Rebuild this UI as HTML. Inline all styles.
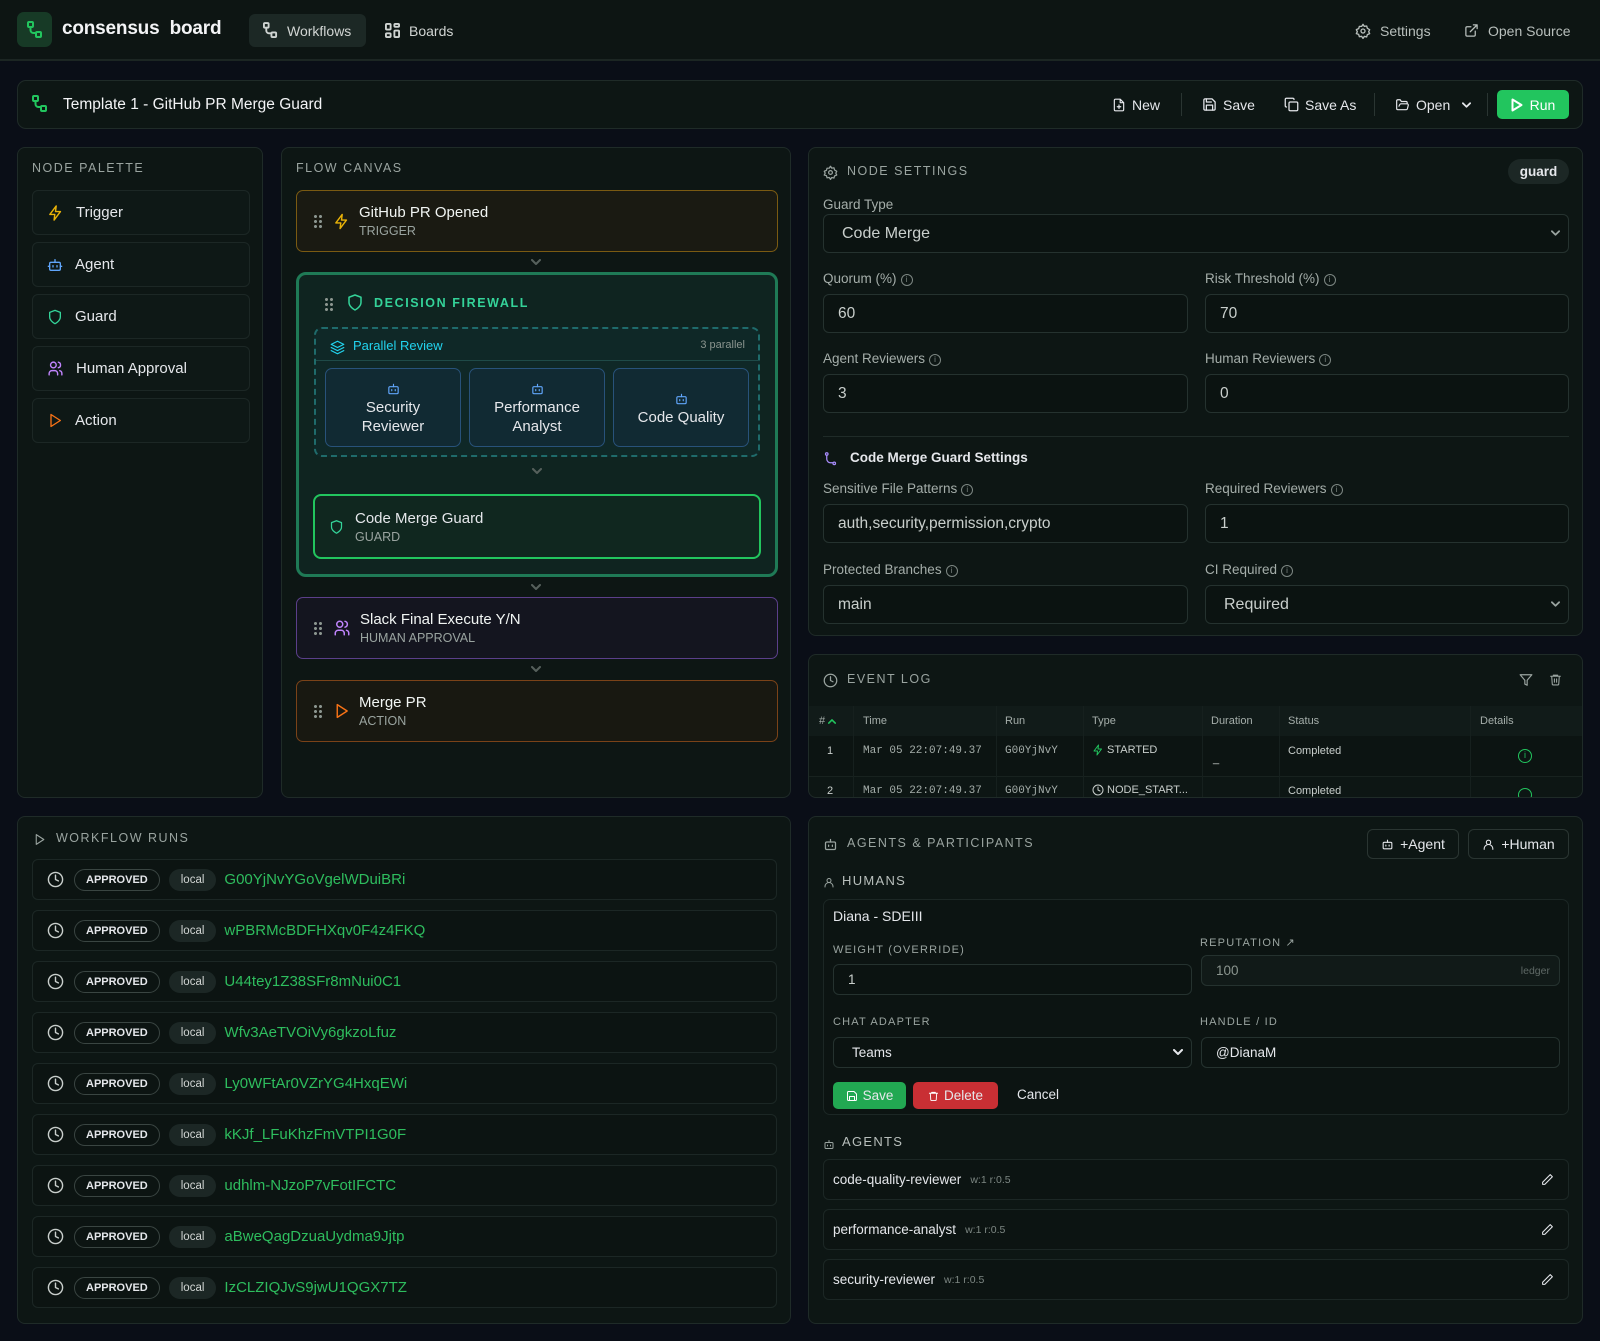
<!DOCTYPE html>
<html><head><meta charset="utf-8"><style>
*{box-sizing:border-box;margin:0;padding:0}
body{width:1600px;height:1341px;background:#0a0e17;font-family:"Liberation Sans",sans-serif;color:#e5e7eb;position:relative;overflow:hidden;font-size:15px}
.a{position:absolute}
.panel{position:absolute;background:#0d1614;border:1px solid #1f2b28;border-radius:8px}
.lbl{position:absolute;font-size:12.5px;letter-spacing:1.5px;color:#9aa4a0;text-transform:uppercase}
svg{display:inline-block;vertical-align:middle;fill:none;stroke-width:2;stroke-linecap:round;stroke-linejoin:round}
.item{position:absolute;left:14px;width:218px;height:45px;border:1px solid #1c2725;border-radius:6px;background:#0e1816;display:flex;align-items:center;padding-left:14px;gap:12px;font-size:15px}
.node{position:absolute;left:14px;width:482px;height:62px;border-radius:7px;display:flex;align-items:center;padding-left:16px}
.node .t{font-size:15px;color:#f1f5f3}
.node .s{font-size:12.5px;color:#9aa4a0;margin-top:3px}
.grip{width:10px;height:14px;margin-right:10px;background:radial-gradient(circle,#8b958f 1.4px,transparent 1.6px) 0 0/5px 5px}
.chev{position:absolute;left:0;width:100%;display:flex;justify-content:center}
.f{position:absolute;font-size:13.5px;color:#a5aeaa}
.in{position:absolute;height:39px;border:1px solid #25322f;border-radius:6px;background:#0b1311;padding-left:14px;display:flex;align-items:center;font-size:15.5px;color:#c9cfcc}
.info{display:inline-block;width:12px;height:12px;border:1px solid #7d8783;border-radius:50%;font-size:8px;text-align:center;line-height:10px;color:#7d8783;margin-left:4px;vertical-align:1px}
.row{position:absolute;left:14px;width:745px;height:41px;border:1px solid #1c2725;border-radius:6px;background:#0c1412;display:flex;align-items:center;padding-left:14px}
.pill{border:1px solid #3a4542;border-radius:12px;font-size:11px;font-weight:bold;padding:4px 11px;color:#e5e7eb;margin-left:10px}
.loc{background:#1c2725;border-radius:12px;font-size:11.5px;padding:5px 12px;color:#d1d5d3;margin-left:9px}
.rid{color:#2ebd5e;font-size:15px;margin-left:8px}
.agent{position:absolute;left:14px;width:746px;height:41px;border:1px solid #1c2725;border-radius:6px;background:#0c1412;display:flex;align-items:center;padding-left:9px;font-size:13.5px}
.agent small{color:#7d8783;font-size:10.5px;margin-left:9px}
.th{position:absolute;top:12px;font-size:11px;color:#a5aeaa}
.td{position:absolute;font-size:11px;color:#c9cfcc}
.mono{font-family:"Liberation Mono",monospace;color:#a5aeaa}
.tb{position:absolute;top:0;height:47px;display:flex;align-items:center;gap:6px;font-size:14px;color:#e5e7eb}
.dd{position:absolute;right:8px;top:50%;margin-top:-4px}
</style></head><body>

<!-- header -->
<div class="a" style="left:0;top:0;width:1600px;height:61px;background:#0d1513;border-bottom:2px solid #1c2623"></div>
<div class="a" style="left:17px;top:12px;width:35px;height:35px;border-radius:7px;background:#173a26;display:flex;align-items:center;justify-content:center"><svg width="16" height="18" viewBox="0 0 16 18" stroke="#22c55e" stroke-width="1.6"><rect x="1" y="1" width="5" height="5" rx="1"/><rect x="9" y="11" width="5" height="5" rx="1"/><path d="M3.5 6v3a3 3 0 0 0 3 3H9"/></svg></div>
<div class="a" style="left:62px;top:18px;font-size:19px;font-weight:bold;color:#f3f4f6;letter-spacing:-0.2px">consensus&nbsp; board</div>
<div class="a" style="left:249px;top:14px;width:117px;height:33px;background:#1c2825;border-radius:6px;display:flex;align-items:center;padding-left:14px;gap:9px;font-size:14px;color:#d1d5d3"><svg width="15" height="17" viewBox="0 0 16 18" stroke="#cfd4d2" stroke-width="1.5"><rect x="1" y="1" width="5" height="5" rx="1"/><rect x="9" y="11" width="5" height="5" rx="1"/><path d="M3.5 6v3a3 3 0 0 0 3 3H9"/></svg>Workflows</div>
<div class="a" style="left:385px;top:14px;height:33px;display:flex;align-items:center;gap:9px;font-size:14px;color:#d1d5d3"><svg width="15" height="15" viewBox="0 0 16 16" stroke="#cfd4d2" stroke-width="1.5"><rect x="1" y="1" width="5" height="6" rx="1"/><rect x="10" y="1" width="5" height="3" rx="1"/><rect x="10" y="8" width="5" height="7" rx="1"/><rect x="1" y="11" width="5" height="4" rx="1"/></svg>Boards</div>
<div class="a" style="left:1355px;top:14px;height:33px;display:flex;align-items:center;gap:9px;font-size:14px;color:#b8bfbc"><svg width="16" height="16" viewBox="0 0 24 24" stroke="#b8bfbc" stroke-width="1.8"><circle cx="12" cy="12" r="3"/><path d="M12 2l2 3 3.5-.5 1 3.4L22 10l-1.5 3 1.5 3-3.5 1.5-1 3.4L14 20l-2 3-2-3-3.5.5-1-3.4L2 16l1.5-3L2 10l3.5-1.5 1-3.4L10 5z"/></svg>Settings</div>
<div class="a" style="left:1464px;top:14px;height:33px;display:flex;align-items:center;gap:9px;font-size:14px;color:#b8bfbc"><svg width="15" height="15" viewBox="0 0 24 24" stroke="#b8bfbc"><path d="M15 3h6v6M10 14L21 3M18 13v6a2 2 0 0 1-2 2H5a2 2 0 0 1-2-2V8a2 2 0 0 1 2-2h6"/></svg>Open Source</div>

<!-- toolbar -->
<div class="panel" style="left:17px;top:80px;width:1566px;height:49px;border-radius:9px">
 <div class="a" style="left:14px;top:14px"><svg width="16" height="18" viewBox="0 0 16 18" stroke="#22c55e" stroke-width="1.6"><rect x="1" y="1" width="5" height="5" rx="1"/><rect x="9" y="11" width="5" height="5" rx="1"/><path d="M3.5 6v3a3 3 0 0 0 3 3H9"/></svg></div>
 <div class="a" style="left:45px;top:15px;font-size:15.5px;color:#f3f4f6">Template 1 - GitHub PR Merge Guard</div>
 <div class="tb" style="left:1094px"><svg width="14" height="16" viewBox="0 0 24 24" stroke="#e5e7eb"><path d="M14 2H6a2 2 0 0 0-2 2v16a2 2 0 0 0 2 2h12a2 2 0 0 0 2-2V8zM14 2v6h6M12 12v6M9 15h6"/></svg>New</div>
 <div class="a" style="left:1163px;top:12px;width:1px;height:23px;background:#2a3532"></div>
 <div class="tb" style="left:1184px"><svg width="15" height="15" viewBox="0 0 24 24" stroke="#e5e7eb"><path d="M19 21H5a2 2 0 0 1-2-2V5a2 2 0 0 1 2-2h11l5 5v11a2 2 0 0 1-2 2z"/><path d="M17 21v-8H7v8M7 3v5h8"/></svg>Save</div>
 <div class="tb" style="left:1266px"><svg width="15" height="15" viewBox="0 0 24 24" stroke="#e5e7eb"><rect x="8" y="8" width="14" height="14" rx="2"/><path d="M4 16a2 2 0 0 1-2-2V4a2 2 0 0 1 2-2h10a2 2 0 0 1 2 2"/></svg>Save As</div>
 <div class="a" style="left:1356px;top:12px;width:1px;height:23px;background:#2a3532"></div>
 <div class="tb" style="left:1377px"><svg width="15" height="14" viewBox="0 0 24 24" stroke="#e5e7eb"><path d="M6 14l1.5-3A2 2 0 0 1 9.2 10H20a2 2 0 0 1 1.9 2.5l-1.5 6A2 2 0 0 1 18.5 20H4a2 2 0 0 1-2-2V5a2 2 0 0 1 2-2h4l2 3h8a2 2 0 0 1 2 2v2"/></svg>Open <svg width="9" height="6" viewBox="0 0 10 6" stroke="#e5e7eb" stroke-width="1.5" style="margin-left:6px"><path d="M1 1l4 4 4-4"/></svg></div>
 <div class="a" style="left:1469px;top:12px;width:1px;height:23px;background:#2a3532"></div>
 <div class="a" style="left:1479px;top:9px;width:72px;height:29px;background:#22c55e;border-radius:5px;display:flex;align-items:center;justify-content:center;gap:7px;font-size:14px;color:#fff"><svg width="12" height="14" viewBox="0 0 12 14" stroke="#fff" stroke-width="1.6"><path d="M1.5 1.5v11l9-5.5z"/></svg>Run</div>
</div>

<!-- node palette -->
<div class="panel" style="left:17px;top:147px;width:246px;height:651px">
 <div class="lbl" style="left:14px;top:13px">Node Palette</div>
 <div class="item" style="top:42px"><svg width="17" height="18" viewBox="0 0 24 24" stroke="#eab308"><path d="M13 2L4 14h7l-1 8 9-12h-7z"/></svg>Trigger</div>
 <div class="item" style="top:94px"><svg width="16" height="16" viewBox="0 0 24 24" stroke="#60a5fa"><rect x="4" y="8" width="16" height="12" rx="2"/><path d="M12 8V4M9 13v2M15 13v2M2 14h2M20 14h2"/></svg>Agent</div>
 <div class="item" style="top:146px"><svg width="16" height="18" viewBox="0 0 24 24" stroke="#34d399"><path d="M12 22s8-4 8-10V5l-8-3-8 3v7c0 6 8 10 8 10z"/></svg>Guard</div>
 <div class="item" style="top:198px"><svg width="17" height="17" viewBox="0 0 24 24" stroke="#c084fc"><circle cx="9" cy="7" r="4"/><path d="M3 21v-2a4 4 0 0 1 4-4h4a4 4 0 0 1 4 4v2M16 3.1a4 4 0 0 1 0 7.8M21 21v-2a4 4 0 0 0-3-3.9"/></svg>Human Approval</div>
 <div class="item" style="top:250px"><svg width="16" height="17" viewBox="0 0 24 24" stroke="#f97316"><path d="M6 3v18l14-9z"/></svg>Action</div>
</div>

<!-- flow canvas -->
<div class="panel" style="left:281px;top:147px;width:510px;height:651px">
 <div class="lbl" style="left:14px;top:13px">Flow Canvas</div>
 <div class="node" style="top:42px;border:1px solid #7a5a12;background:#1a1a12"><div class="grip"></div><svg width="17" height="19" viewBox="0 0 24 24" stroke="#eab308" style="margin-right:9px"><path d="M13 2L4 14h7l-1 8 9-12h-7z"/></svg><div><div class="t">GitHub PR Opened</div><div class="s">TRIGGER</div></div></div>
 <div class="chev" style="top:111px"><svg width="10" height="6" viewBox="0 0 10 6" stroke="#56605c" stroke-width="1.3"><path d="M1 1l4 4 4-4"/></svg></div>
 <div class="a" style="left:14px;top:124px;width:482px;height:305px;border:3px solid #1f7a56;border-radius:10px;background:#0f2420">
  <div class="a" style="left:25px;top:22px;width:10px;height:14px;background:radial-gradient(circle,#8b958f 1.4px,transparent 1.6px) 0 0/5px 5px"></div>
  <div class="a" style="left:47px;top:17px"><svg width="18" height="21" viewBox="0 0 24 24" stroke="#34d399"><path d="M12 22s8-4 8-10V5l-8-3-8 3v7c0 6 8 10 8 10z"/></svg></div>
  <div class="a" style="left:75px;top:21px;font-size:12.5px;font-weight:bold;letter-spacing:1.6px;color:#34d399">DECISION FIREWALL</div>
  <div class="a" style="left:15px;top:52px;width:446px;height:130px;border:2px dashed #1f6b6b;border-radius:8px;background:#0f2827">
   <div class="a" style="left:14px;top:9px"><svg width="15" height="15" viewBox="0 0 24 24" stroke="#22d3ee"><path d="M12 2L2 7l10 5 10-5zM2 12l10 5 10-5M2 17l10 5 10-5"/></svg></div>
   <div class="a" style="left:37px;top:9px;font-size:13px;color:#22d3ee">Parallel Review</div>
   <div class="a" style="right:13px;top:10px;font-size:11px;color:#8b958f">3 parallel</div>
   <div class="a" style="left:0;top:31px;width:100%;height:1px;background:#1f4a48"></div>
   <div class="a" style="left:9px;top:39px;width:136px;height:79px;border:1px solid #28527a;border-radius:7px;background:#112a33;text-align:center;font-size:15px;line-height:19px;padding-top:10px"><svg width="15" height="14" viewBox="0 0 24 24" stroke="#60a5fa"><rect x="4" y="8" width="16" height="12" rx="2"/><path d="M12 8V4M9 13v2M15 13v2"/></svg><br>Security<br>Reviewer</div>
   <div class="a" style="left:153px;top:39px;width:136px;height:79px;border:1px solid #28527a;border-radius:7px;background:#112a33;text-align:center;font-size:15px;line-height:19px;padding-top:10px"><svg width="15" height="14" viewBox="0 0 24 24" stroke="#60a5fa"><rect x="4" y="8" width="16" height="12" rx="2"/><path d="M12 8V4M9 13v2M15 13v2"/></svg><br>Performance<br>Analyst</div>
   <div class="a" style="left:297px;top:39px;width:136px;height:79px;border:1px solid #28527a;border-radius:7px;background:#112a33;text-align:center;font-size:15px;line-height:19px;padding-top:20px"><svg width="15" height="14" viewBox="0 0 24 24" stroke="#60a5fa"><rect x="4" y="8" width="16" height="12" rx="2"/><path d="M12 8V4M9 13v2M15 13v2"/></svg><br>Code Quality</div>
  </div>
  <div class="chev" style="top:193px"><svg width="10" height="6" viewBox="0 0 10 6" stroke="#56605c" stroke-width="1.3"><path d="M1 1l4 4 4-4"/></svg></div>
  <div class="a" style="left:14px;top:219px;width:448px;height:65px;border:2px solid #22c55e;border-radius:8px;background:#10271f;display:flex;align-items:center;padding-left:14px"><svg width="15" height="18" viewBox="0 0 24 24" stroke="#34d399" style="margin-right:11px"><path d="M12 22s8-4 8-10V5l-8-3-8 3v7c0 6 8 10 8 10z"/></svg><div><div style="font-size:15px">Code Merge Guard</div><div style="font-size:12.5px;color:#9aa4a0;margin-top:3px">GUARD</div></div></div>
 </div>
 <div class="chev" style="top:436px"><svg width="10" height="6" viewBox="0 0 10 6" stroke="#56605c" stroke-width="1.3"><path d="M1 1l4 4 4-4"/></svg></div>
 <div class="node" style="top:449px;border:1px solid #5b3f8a;background:#14151f"><div class="grip"></div><svg width="18" height="18" viewBox="0 0 24 24" stroke="#c084fc" style="margin-right:9px"><circle cx="9" cy="7" r="4"/><path d="M3 21v-2a4 4 0 0 1 4-4h4a4 4 0 0 1 4 4v2M16 3.1a4 4 0 0 1 0 7.8M21 21v-2a4 4 0 0 0-3-3.9"/></svg><div><div class="t">Slack Final Execute Y/N</div><div class="s">HUMAN APPROVAL</div></div></div>
 <div class="chev" style="top:518px"><svg width="10" height="6" viewBox="0 0 10 6" stroke="#56605c" stroke-width="1.3"><path d="M1 1l4 4 4-4"/></svg></div>
 <div class="node" style="top:532px;border:1px solid #7a4218;background:#181811"><div class="grip"></div><svg width="17" height="18" viewBox="0 0 24 24" stroke="#f97316" style="margin-right:9px"><path d="M6 3v18l14-9z"/></svg><div><div class="t">Merge PR</div><div class="s">ACTION</div></div></div>
</div>

<!-- node settings -->
<div class="panel" style="left:808px;top:147px;width:775px;height:489px">
 <div class="a" style="left:14px;top:15px"><svg width="15" height="15" viewBox="0 0 24 24" stroke="#9aa4a0"><circle cx="12" cy="12" r="3"/><path d="M12 2l2 3 3.5-.5 1 3.4L22 10l-1.5 3 1.5 3-3.5 1.5-1 3.4L14 20l-2 3-2-3-3.5.5-1-3.4L2 16l1.5-3L2 10l3.5-1.5 1-3.4L10 5z"/></svg></div>
 <div class="lbl" style="left:38px;top:16px">Node Settings</div>
 <div class="a" style="left:699px;top:11px;width:61px;height:25px;border-radius:13px;background:#1c2725;font-size:13.5px;font-weight:bold;text-align:center;line-height:25px">guard</div>
 <div class="f" style="left:14px;top:49px">Guard Type</div>
 <div class="in" style="left:14px;top:66px;width:746px;padding-left:18px;font-size:16px">Code Merge<svg class="dd" width="9" height="6" viewBox="0 0 10 6" stroke="#9aa4a0" stroke-width="1.3"><path d="M1 1l4 4 4-4"/></svg></div>
 <div class="f" style="left:14px;top:123px">Quorum (%)<span class="info">i</span></div>
 <div class="f" style="left:396px;top:123px">Risk Threshold (%)<span class="info">i</span></div>
 <div class="in" style="left:14px;top:146px;width:365px">60</div>
 <div class="in" style="left:396px;top:146px;width:364px">70</div>
 <div class="f" style="left:14px;top:203px">Agent Reviewers<span class="info">i</span></div>
 <div class="f" style="left:396px;top:203px">Human Reviewers<span class="info">i</span></div>
 <div class="in" style="left:14px;top:226px;width:365px">3</div>
 <div class="in" style="left:396px;top:226px;width:364px">0</div>
 <div class="a" style="left:14px;top:288px;width:746px;height:1px;background:#1f2b28"></div>
 <div class="a" style="left:14px;top:302px"><svg width="15" height="16" viewBox="0 0 24 24" stroke="#a78bfa"><circle cx="6" cy="4" r="2"/><circle cx="18" cy="19" r="2"/><path d="M6 6v6a6 6 0 0 0 6 6h4"/></svg></div>
 <div class="a" style="left:41px;top:302px;font-size:13.5px;font-weight:bold">Code Merge Guard Settings</div>
 <div class="f" style="left:14px;top:333px">Sensitive File Patterns<span class="info">i</span></div>
 <div class="f" style="left:396px;top:333px">Required Reviewers<span class="info">i</span></div>
 <div class="in" style="left:14px;top:356px;width:365px">auth,security,permission,crypto</div>
 <div class="in" style="left:396px;top:356px;width:364px">1</div>
 <div class="f" style="left:14px;top:414px">Protected Branches<span class="info">i</span></div>
 <div class="f" style="left:396px;top:414px">CI Required<span class="info">i</span></div>
 <div class="in" style="left:14px;top:437px;width:365px">main</div>
 <div class="in" style="left:396px;top:437px;width:364px;padding-left:18px;font-size:16px">Required<svg class="dd" width="9" height="6" viewBox="0 0 10 6" stroke="#9aa4a0" stroke-width="1.3"><path d="M1 1l4 4 4-4"/></svg></div>
</div>

<!-- event log -->
<div class="panel" style="left:808px;top:654px;width:775px;height:144px;overflow:hidden">
 <div class="a" style="left:14px;top:16px"><svg width="15" height="15" viewBox="0 0 24 24" stroke="#9aa4a0"><circle cx="12" cy="12" r="10"/><path d="M12 6v6l4 2"/></svg></div>
 <div class="lbl" style="left:38px;top:17px">Event Log</div>
 <div class="a" style="left:710px;top:16px"><svg width="14" height="14" viewBox="0 0 24 24" stroke="#9aa4a0"><path d="M22 3H2l8 9.5V19l4 2v-8.5z"/></svg></div>
 <div class="a" style="left:740px;top:15px"><svg width="13" height="15" viewBox="0 0 24 24" stroke="#9aa4a0"><path d="M3 6h18M8 6V4h8v2M19 6l-1 14a2 2 0 0 1-2 2H8a2 2 0 0 1-2-2L5 6M10 11v6M14 11v6"/></svg></div>
 <div class="a" style="left:0;top:51px;width:775px;height:30px;background:#111b19"></div>
 <div class="a" style="left:0;top:81px;width:775px;height:40px;background:#0c1412"></div>
 <div class="a" style="left:0;top:121px;width:775px;height:1px;background:#18221f"></div>
 <div class="a" style="left:44px;top:51px;width:1px;height:100px;background:#16201e"></div>
 <div class="a" style="left:187px;top:51px;width:1px;height:100px;background:#16201e"></div>
 <div class="a" style="left:274px;top:51px;width:1px;height:100px;background:#16201e"></div>
 <div class="a" style="left:393px;top:51px;width:1px;height:100px;background:#16201e"></div>
 <div class="a" style="left:470px;top:51px;width:1px;height:100px;background:#16201e"></div>
 <div class="a" style="left:661px;top:51px;width:1px;height:100px;background:#16201e"></div>
 <div class="th" style="top:60px;left:10px"># <svg width="8" height="5" viewBox="0 0 10 6" stroke="#22c55e" stroke-width="1.5"><path d="M1 5l4-4 4 4"/></svg></div>
 <div class="th" style="top:60px;left:54px">Time</div>
 <div class="th" style="top:60px;left:196px">Run</div>
 <div class="th" style="top:60px;left:283px">Type</div>
 <div class="th" style="top:60px;left:402px">Duration</div>
 <div class="th" style="top:60px;left:479px">Status</div>
 <div class="th" style="top:60px;left:671px">Details</div>
 <div class="td" style="top:90px;left:18px">1</div>
 <div class="td mono" style="top:90px;left:54px">Mar 05 22:07:49.37</div>
 <div class="td mono" style="top:90px;left:196px">G00YjNvY</div>
 <div class="td" style="top:88px;left:283px"><svg width="12" height="14" viewBox="0 0 24 24" stroke="#22c55e"><path d="M13 2L4 14h7l-1 8 9-12h-7z"/></svg> STARTED</div>
 <div class="td" style="top:98px;left:404px">_</div>
 <div class="td" style="top:90px;left:479px">Completed</div>
 <div class="a" style="left:709px;top:94px;width:14px;height:14px;border:1.5px solid #22c55e;border-radius:50%;color:#22c55e;font-size:9px;text-align:center;line-height:11px">i</div>
 <div class="td" style="top:130px;left:18px">2</div>
 <div class="td mono" style="top:130px;left:54px">Mar 05 22:07:49.37</div>
 <div class="td mono" style="top:130px;left:196px">G00YjNvY</div>
 <div class="td" style="top:129px;left:283px"><svg width="12" height="12" viewBox="0 0 24 24" stroke="#c9cfcc"><circle cx="12" cy="12" r="10"/><path d="M12 6v6l4 2"/></svg> NODE_START...</div>
 <div class="td" style="top:130px;left:479px">Completed</div>
 <div class="a" style="left:709px;top:133px;width:14px;height:14px;border:1.5px solid #22c55e;border-radius:50%"></div>
</div>

<!-- workflow runs -->
<div class="panel" style="left:17px;top:816px;width:774px;height:508px">
 <div class="a" style="left:15px;top:13px"><svg width="13" height="15" viewBox="0 0 24 24" stroke="#9aa4a0"><path d="M6 3v18l14-9z"/></svg></div>
 <div class="lbl" style="left:38px;top:14px">Workflow Runs</div>
 <div class="row" style="top:42px"><svg width="17" height="17" viewBox="0 0 24 24" stroke="#c9cfcc"><circle cx="12" cy="12" r="10"/><path d="M12 6v6l4 2"/></svg><span class="pill">APPROVED</span><span class="loc">local</span><span class="rid">G00YjNvYGoVgelWDuiBRi</span></div>
 <div class="row" style="top:93px"><svg width="17" height="17" viewBox="0 0 24 24" stroke="#c9cfcc"><circle cx="12" cy="12" r="10"/><path d="M12 6v6l4 2"/></svg><span class="pill">APPROVED</span><span class="loc">local</span><span class="rid">wPBRMcBDFHXqv0F4z4FKQ</span></div>
 <div class="row" style="top:144px"><svg width="17" height="17" viewBox="0 0 24 24" stroke="#c9cfcc"><circle cx="12" cy="12" r="10"/><path d="M12 6v6l4 2"/></svg><span class="pill">APPROVED</span><span class="loc">local</span><span class="rid">U44tey1Z38SFr8mNui0C1</span></div>
 <div class="row" style="top:195px"><svg width="17" height="17" viewBox="0 0 24 24" stroke="#c9cfcc"><circle cx="12" cy="12" r="10"/><path d="M12 6v6l4 2"/></svg><span class="pill">APPROVED</span><span class="loc">local</span><span class="rid">Wfv3AeTVOiVy6gkzoLfuz</span></div>
 <div class="row" style="top:246px"><svg width="17" height="17" viewBox="0 0 24 24" stroke="#c9cfcc"><circle cx="12" cy="12" r="10"/><path d="M12 6v6l4 2"/></svg><span class="pill">APPROVED</span><span class="loc">local</span><span class="rid">Ly0WFtAr0VZrYG4HxqEWi</span></div>
 <div class="row" style="top:297px"><svg width="17" height="17" viewBox="0 0 24 24" stroke="#c9cfcc"><circle cx="12" cy="12" r="10"/><path d="M12 6v6l4 2"/></svg><span class="pill">APPROVED</span><span class="loc">local</span><span class="rid">kKJf_LFuKhzFmVTPI1G0F</span></div>
 <div class="row" style="top:348px"><svg width="17" height="17" viewBox="0 0 24 24" stroke="#c9cfcc"><circle cx="12" cy="12" r="10"/><path d="M12 6v6l4 2"/></svg><span class="pill">APPROVED</span><span class="loc">local</span><span class="rid">udhlm-NJzoP7vFotIFCTC</span></div>
 <div class="row" style="top:399px"><svg width="17" height="17" viewBox="0 0 24 24" stroke="#c9cfcc"><circle cx="12" cy="12" r="10"/><path d="M12 6v6l4 2"/></svg><span class="pill">APPROVED</span><span class="loc">local</span><span class="rid">aBweQagDzuaUydma9Jjtp</span></div>
 <div class="row" style="top:450px"><svg width="17" height="17" viewBox="0 0 24 24" stroke="#c9cfcc"><circle cx="12" cy="12" r="10"/><path d="M12 6v6l4 2"/></svg><span class="pill">APPROVED</span><span class="loc">local</span><span class="rid">IzCLZIQJvS9jwU1QGX7TZ</span></div>
</div>

<!-- agents & participants -->
<div class="panel" style="left:808px;top:816px;width:775px;height:508px">
 <div class="a" style="left:14px;top:18px"><svg width="15" height="15" viewBox="0 0 24 24" stroke="#9aa4a0"><rect x="4" y="8" width="16" height="12" rx="2"/><path d="M12 8V4M9 13v2M15 13v2"/></svg></div>
 <div class="lbl" style="left:38px;top:19px">Agents &amp; Participants</div>
 <div class="a" style="left:558px;top:12px;width:92px;height:30px;border:1px solid #2a3532;border-radius:6px;display:flex;align-items:center;justify-content:center;gap:6px;font-size:14px"><svg width="13" height="13" viewBox="0 0 24 24" stroke="#e5e7eb"><rect x="4" y="8" width="16" height="12" rx="2"/><path d="M12 8V4M9 13v2M15 13v2"/></svg>+Agent</div>
 <div class="a" style="left:659px;top:12px;width:101px;height:30px;border:1px solid #2a3532;border-radius:6px;display:flex;align-items:center;justify-content:center;gap:6px;font-size:14px"><svg width="13" height="13" viewBox="0 0 24 24" stroke="#e5e7eb"><circle cx="12" cy="8" r="4"/><path d="M4 21v-1a6 6 0 0 1 16 0v1"/></svg>+Human</div>
 <div class="a" style="left:14px;top:56px"><svg width="12" height="13" viewBox="0 0 24 24" stroke="#9aa4a0"><circle cx="12" cy="8" r="4"/><path d="M4 21v-1a6 6 0 0 1 16 0v1"/></svg></div>
 <div class="a" style="left:33px;top:56px;font-size:13px;letter-spacing:1.3px;color:#b8bfbc">HUMANS</div>
 <div class="a" style="left:14px;top:82px;width:746px;height:216px;border:1px solid #1c2725;border-radius:7px;background:#0c1412">
  <div class="a" style="left:9px;top:8px;font-size:14px">Diana - SDEIII</div>
  <div class="lbl" style="left:9px;top:44px;font-size:11px;letter-spacing:1.2px">Weight (Override)</div>
  <div class="lbl" style="left:376px;top:36px;font-size:11px;letter-spacing:1.2px">Reputation &#8599;</div>
  <div class="in" style="left:9px;top:64px;width:359px;height:31px;font-size:13.5px">1</div>
  <div class="in" style="left:377px;top:55px;width:359px;height:31px;font-size:13.5px;background:#111a18;color:#8b958f">100<span style="position:absolute;right:9px;font-size:10.5px;color:#5f6966">ledger</span></div>
  <div class="lbl" style="left:9px;top:116px;font-size:11px;letter-spacing:1.2px">Chat Adapter</div>
  <div class="lbl" style="left:376px;top:116px;font-size:11px;letter-spacing:1.2px">Handle / ID</div>
  <div class="in" style="left:9px;top:137px;width:359px;height:31px;font-size:13.5px;padding-left:18px;color:#e5e7eb">Teams<svg class="dd" width="10" height="6" viewBox="0 0 10 6" stroke="#e5e7eb" stroke-width="1.5"><path d="M1 1l4 4 4-4"/></svg></div>
  <div class="in" style="left:377px;top:137px;width:359px;height:31px;font-size:13.5px;color:#e5e7eb">@DianaM</div>
  <div class="a" style="left:9px;top:182px;width:73px;height:27px;background:#22a852;border-radius:5px;display:flex;align-items:center;justify-content:center;gap:5px;font-size:13.5px"><svg width="12" height="12" viewBox="0 0 24 24" stroke="#fff"><path d="M19 21H5a2 2 0 0 1-2-2V5a2 2 0 0 1 2-2h11l5 5v11a2 2 0 0 1-2 2z"/><path d="M17 21v-8H7v8"/></svg>Save</div>
  <div class="a" style="left:89px;top:182px;width:85px;height:27px;background:#c92f34;border-radius:5px;display:flex;align-items:center;justify-content:center;gap:5px;font-size:13.5px"><svg width="11" height="12" viewBox="0 0 24 24" stroke="#fff"><path d="M3 6h18M8 6V4h8v2M19 6l-1 14a2 2 0 0 1-2 2H8a2 2 0 0 1-2-2L5 6"/></svg>Delete</div>
  <div class="a" style="left:193px;top:187px;font-size:13.5px">Cancel</div>
 </div>
 <div class="a" style="left:14px;top:318px"><svg width="12" height="13" viewBox="0 0 24 24" stroke="#9aa4a0"><rect x="4" y="8" width="16" height="12" rx="2"/><path d="M12 8V4M9 13v2M15 13v2"/></svg></div>
 <div class="a" style="left:33px;top:317px;font-size:13px;letter-spacing:1.3px;color:#b8bfbc">AGENTS</div>
 <div class="agent" style="top:342px">code-quality-reviewer<small>w:1 r:0.5</small><svg style="position:absolute;right:14px" width="13" height="13" viewBox="0 0 24 24" stroke="#e5e7eb"><path d="M17 3l4 4L7 21H3v-4z"/></svg></div>
 <div class="agent" style="top:392px">performance-analyst<small>w:1 r:0.5</small><svg style="position:absolute;right:14px" width="13" height="13" viewBox="0 0 24 24" stroke="#e5e7eb"><path d="M17 3l4 4L7 21H3v-4z"/></svg></div>
 <div class="agent" style="top:442px">security-reviewer<small>w:1 r:0.5</small><svg style="position:absolute;right:14px" width="13" height="13" viewBox="0 0 24 24" stroke="#e5e7eb"><path d="M17 3l4 4L7 21H3v-4z"/></svg></div>
</div>

</body></html>
